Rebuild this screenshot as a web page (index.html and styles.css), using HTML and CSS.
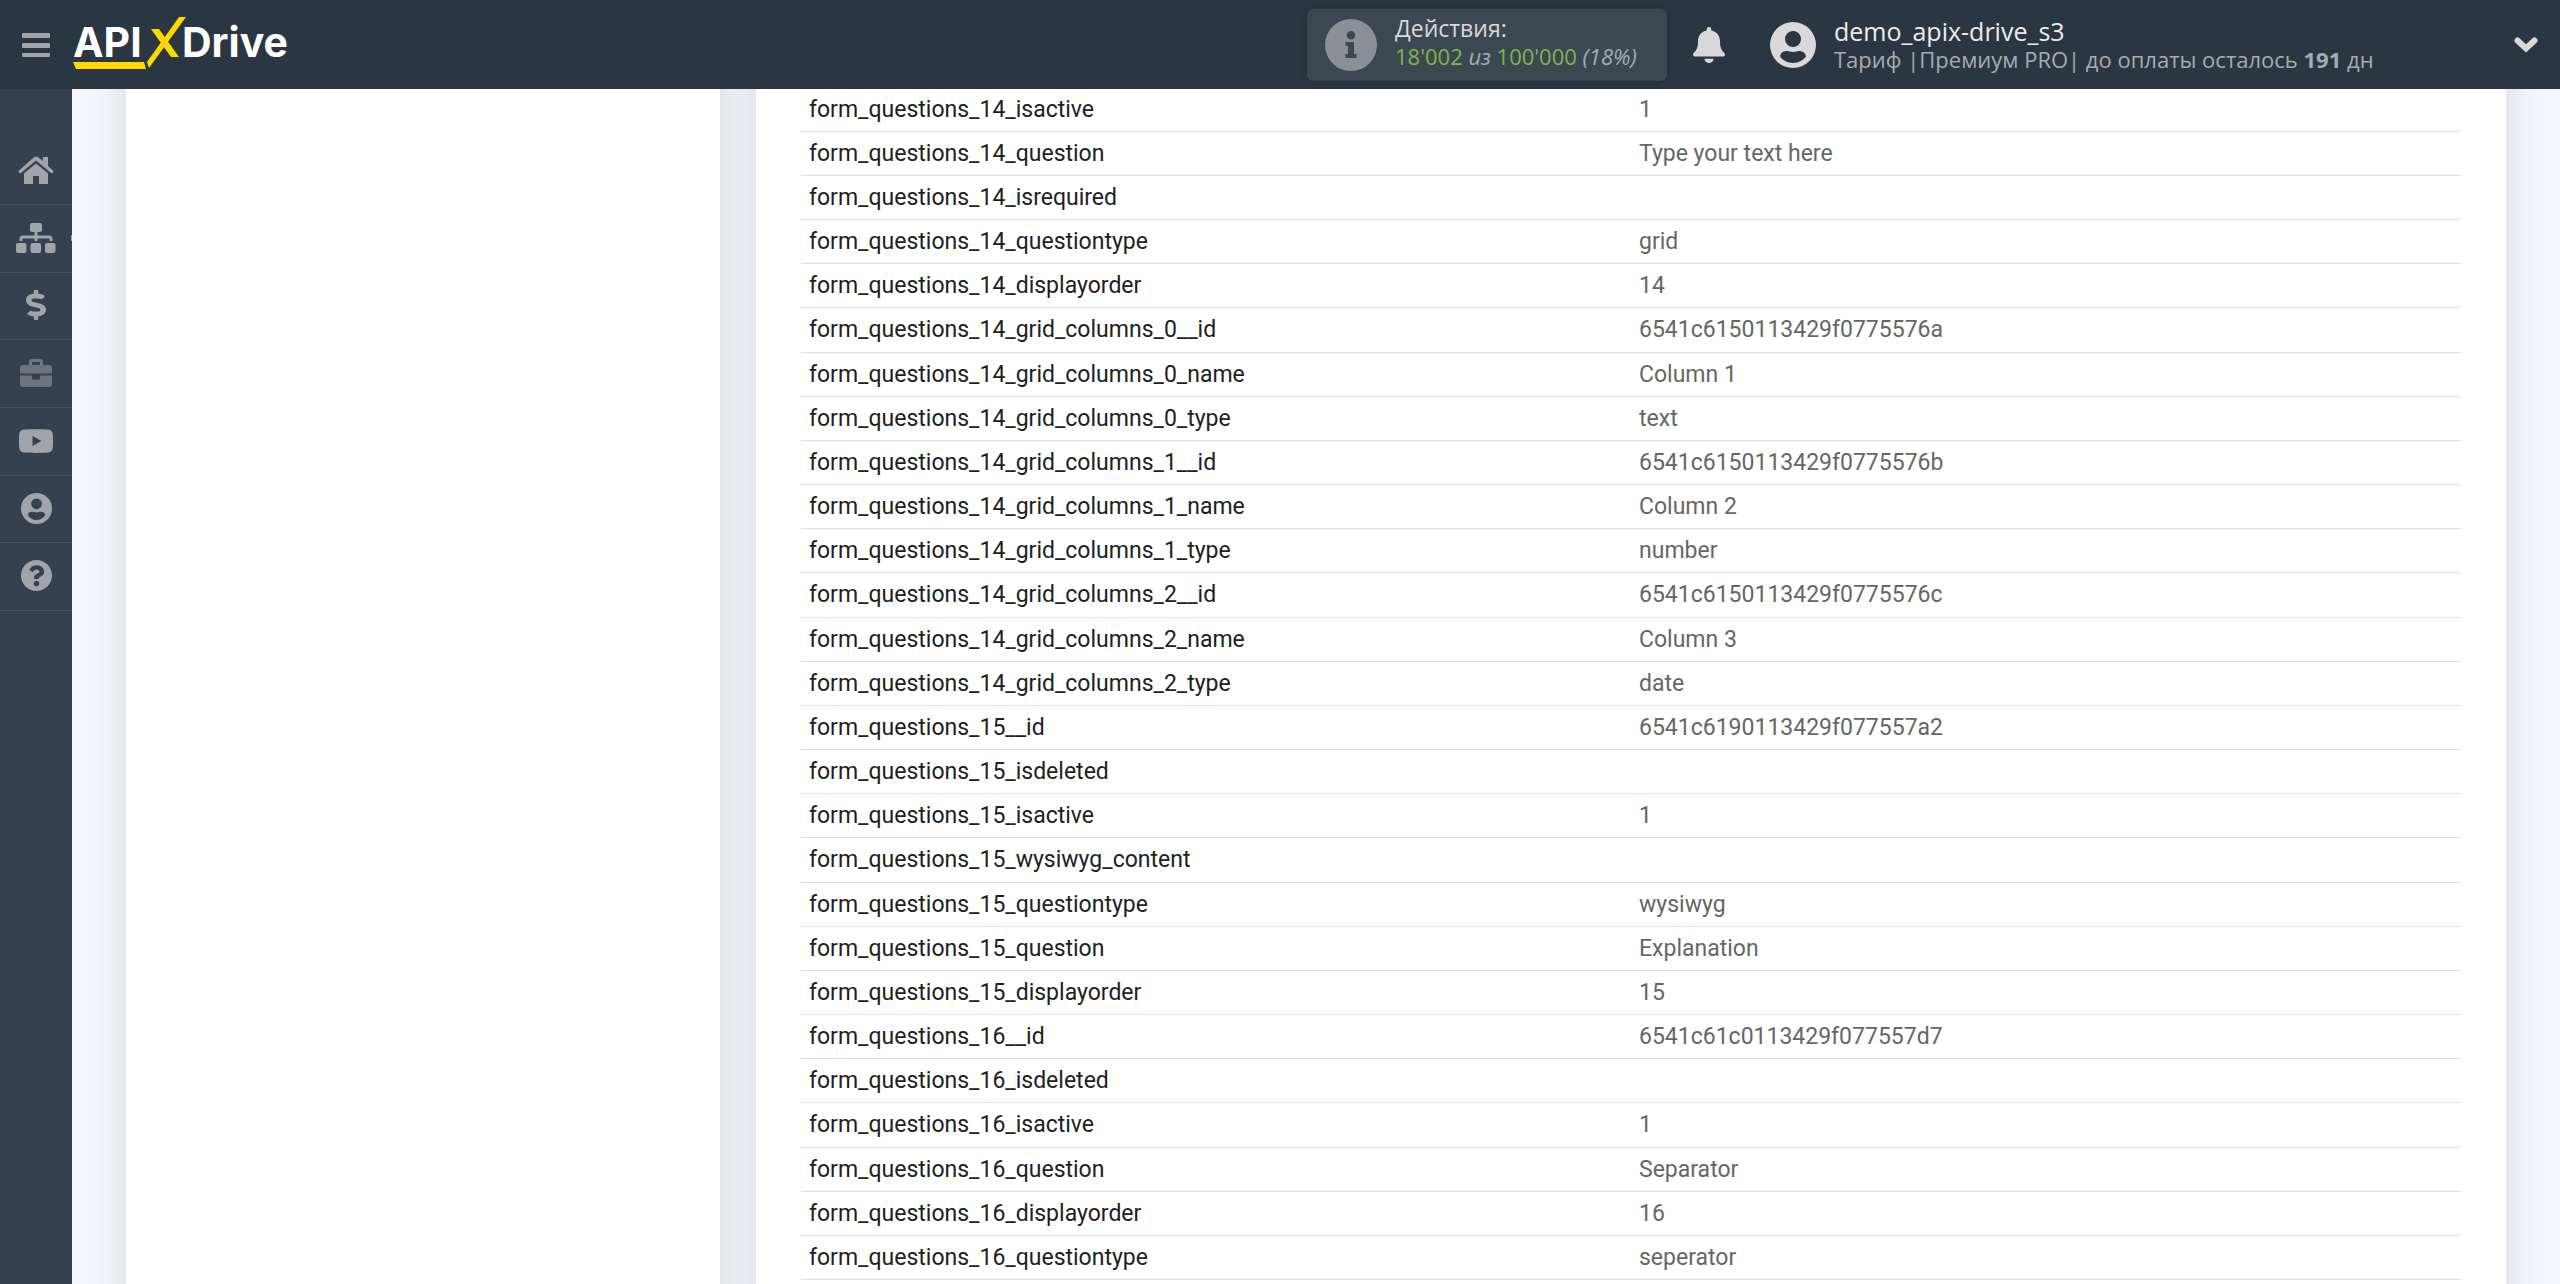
FILE: index.html
```html
<!DOCTYPE html>
<html lang="ru">
<head>
<meta charset="utf-8">
<meta name="viewport" content="width=device-width, initial-scale=1">
<title>ApiX-Drive</title>
<link rel="stylesheet" href="styles.css">
</head>
<body>
<header class="topbar">
  <button class="menu-toggle" type="button" aria-label="Меню">
    <svg width="28" height="24" viewBox="0 0 28 24"><rect width="28" height="5" rx="1"/><rect y="10" width="28" height="5" rx="1"/><rect y="20" width="28" height="4" rx="1"/></svg>
  </button>
  <a class="logo" href="#" aria-label="APIXDrive">
    <svg width="224" height="56" viewBox="0 0 224 56">
      <text class="logo-text" x="0" y="40">API</text>
      <path class="logo-mark" d="M78 12h8l20 28h-8zM106 0h7L76 51l-2-6zM0 45h71l2 7H3z"/>
      <text class="logo-text" x="109" y="40">Drive</text>
    </svg>
  </a>
  <div class="actions">
    <svg width="52" height="52" viewBox="0 0 52 52"><path fill-rule="evenodd" d="M26 0a26 26 0 1 1 0 52a26 26 0 1 1 0-52zM26 12a4.300 4.300 0 1 0 0 8.600a4.300 4.300 0 0 0 0-8.600zM20.500 23v4h2.500v8h-2.500v4h11v-4H29V23z"/></svg>
    <div class="actions-text">
      <span class="line-main">Действия:</span>
      <span class="line-sub"><b>18'002</b> <i>из</i> <b>100'000</b> <i>(18%)</i></span>
    </div>
  </div>
  <button class="bell" type="button" aria-label="Уведомления">
    <svg width="32" height="36" viewBox="0 0 32 36"><path d="M16 0a2.300 2.300 0 0 1 2.300 2.300v1.200C24 4.600 27 9 27 14.500c0 7 2 9 4.300 11.500 1.500 1.800.3 3.500-1.500 3.500H2.200C.4 29.500-.8 27.800.7 26 3 23.500 5 21.500 5 14.500 5 9 8 4.600 13.700 3.500V2.300A2.300 2.300 0 0 1 16 0zM11.500 31.700h9a4.500 4.300 0 0 1-9 0z"/></svg>
  </button>
  <button class="user" type="button">
    <svg width="46" height="46" viewBox="0 0 46 46"><path fill-rule="evenodd" d="M23 0a23 23 0 1 1 0 46a23 23 0 1 1 0-46zM23 9a8 8 0 1 0 0 16a8 8 0 0 0 0-16zM17 29c-4 0-6.500 2.200-7 5.500C12.500 38 17 41 23 41s10.500-3 13-6.500c-.5-3.300-3-5.500-7-5.500-2 0-3 1-6 1s-4-1-6-1z"/></svg>
    <span class="user-text">
      <span class="line-main">demo_apix-drive_s3</span>
      <span class="line-sub">Тариф |Премиум PRO| до оплаты осталось <strong>191</strong> дн</span>
    </span>
    <svg class="chevron" width="24" height="16" viewBox="0 0 24 16"><path d="M3.500 3.500L12 11.500l8.500-8"/></svg>
  </button>
</header>
<div class="shell">
  <nav class="sidebar" aria-label="Разделы">
    <a href="#" aria-label="Главная"><svg width="36" height="28" viewBox="0 0 36 28"><path d="M25 5V1h5v9l5 4.500c1.500 1.500-.8 3.500-2.200 2.300L18 4.600 3.200 16.800C1.800 18-.5 16 1 14.500L16 1.200c1.300-1 2.700-1 4 0zM18 7.500l12 9.800V28h-9v-8h-6v8H6V17.300z"/></svg></a>
    <a class="has-sub" href="#" aria-label="Связи"><svg width="40" height="30" viewBox="0 0 40 30"><rect x="14" width="12" height="9" rx="2"/><path d="M18.500 8h3v4.500H34a3 3 0 0 1 2.500 3V18h-3v-2.500h-12V18h-3v-2.500h-12V18h-3v-2.500a3 3 0 0 1 2.500-3h12.500z"/><rect y="20" width="10.500" height="10" rx="2"/><rect x="14.500" y="20" width="10.500" height="10" rx="2"/><rect x="29" y="20" width="10.500" height="10" rx="2"/></svg></a>
    <a href="#" aria-label="Оплата"><svg width="20" height="30" viewBox="0 0 288 512" preserveAspectRatio="none"><path d="M209.200 233.400l-108-31.600C88.700 198.200 80 186.500 80 173.500c0-16.300 13.200-29.500 29.500-29.500h66.300c12.200 0 24.200 3.700 34.200 10.500 6.100 4.100 14.300 3.100 19.500-2l34.800-34c7.100-6.900 6.100-18.400-1.800-24.500C238 74.800 207.400 64.100 176 64V16c0-8.800-7.200-16-16-16h-32c-8.800 0-16 7.200-16 16v48h-2.500C45.800 64-5.400 118.700.5 183.600c4.200 46.100 39.400 83.600 83.800 96.600l102.500 30c12.500 3.700 21.200 15.300 21.200 28.300 0 16.300-13.200 29.500-29.500 29.500h-66.300C100 368 88 364.300 78 357.500c-6.100-4.100-14.300-3.100-19.500 2l-34.800 34c-7.100 6.900-6.100 18.400 1.800 24.500 24.500 19.200 55.100 29.900 86.500 30v48c0 8.800 7.200 16 16 16h32c8.800 0 16-7.200 16-16v-48.200c46.600-.9 90.300-28.600 105.700-72.700 21.500-61.600-14.600-124.800-72.500-141.700z"/></svg></a>
    <a class="dim" href="#" aria-label="Проекты"><svg width="32" height="28" viewBox="0 0 32 28"><path fill-rule="evenodd" d="M9 6V3a3 3 0 0 1 3-3h8a3 3 0 0 1 3 3v3h6a3 3 0 0 1 3 3v5.500H0V9a3 3 0 0 1 3-3zM12 6h8V3h-8zM0 16.500h12V19c0 1 .5 1.500 1.500 1.500h5c1 0 1.500-.5 1.500-1.500v-2.500h12V25a3 3 0 0 1-3 3H3a3 3 0 0 1-3-3z"/></svg></a>
    <a href="#" aria-label="Видео"><svg width="34" height="24" viewBox="0 0 34 24"><path fill-rule="evenodd" d="M5 .5C12 0 22 0 29 .5c3 .2 4.400 2 4.700 4.500.4 4 .4 10 0 14-.3 2.500-1.700 4.300-4.700 4.500-7 .5-17 .5-24 0C2 23.300.6 21.500.3 19c-.4-4-.4-10 0-14C.6 2.500 2 .7 5 .5zM13.500 7v10l9-5z"/></svg></a>
    <a href="#" aria-label="Профиль"><svg width="31" height="31" viewBox="0 0 46 46"><path fill-rule="evenodd" d="M23 0a23 23 0 1 1 0 46a23 23 0 1 1 0-46zM23 8a8 8 0 1 0 0 16a8 8 0 0 0 0-16zM17 28c-4 0-6.500 1.800-7 4.500C12.500 36.500 17 40 23 40s10.500-3.500 13-7.500c-.5-2.700-3-4.500-7-4.500-2 0-3 1-6 1s-4-1-6-1z"/></svg></a>
    <a href="#" aria-label="Помощь"><svg width="31" height="31" viewBox="8 8 496 496"><path d="M504 256c0 137-111 248-248 248S8 393 8 256C8 119.100 119 8 256 8s248 111.100 248 248zM262.700 90c-54.500 0-89.300 23-116.500 63.800-3.500 5.300-2.400 12.400 2.700 16.300l34.700 26.300c5.200 3.900 12.600 3 16.700-2.100 17.900-22.700 30.100-35.800 57.300-35.800 20.400 0 45.700 13.100 45.700 33 0 15-12.400 22.700-32.500 34C247.100 238.500 216 254.900 216 296v4c0 6.600 5.400 12 12 12h56c6.600 0 12-5.400 12-12v-1.300c0-28.500 83.200-29.600 83.200-106.700 0-58-60.200-102-116.500-102zM256 338c-25.400 0-46 20.600-46 46s20.600 46 46 46 46-20.600 46-46-20.600-46-46-46z"/></svg></a>
  </nav>
  <main class="content">
    <aside class="card"></aside>
    <section class="card card-data">
      <table class="fields">
        <tbody>
          <tr><th scope="row">form_questions_14_isactive</th><td>1</td></tr>
          <tr><th scope="row">form_questions_14_question</th><td>Type your text here</td></tr>
          <tr><th scope="row">form_questions_14_isrequired</th><td></td></tr>
          <tr><th scope="row">form_questions_14_questiontype</th><td>grid</td></tr>
          <tr><th scope="row">form_questions_14_displayorder</th><td>14</td></tr>
          <tr><th scope="row">form_questions_14_grid_columns_0__id</th><td>6541c6150113429f0775576a</td></tr>
          <tr><th scope="row">form_questions_14_grid_columns_0_name</th><td>Column 1</td></tr>
          <tr><th scope="row">form_questions_14_grid_columns_0_type</th><td>text</td></tr>
          <tr><th scope="row">form_questions_14_grid_columns_1__id</th><td>6541c6150113429f0775576b</td></tr>
          <tr><th scope="row">form_questions_14_grid_columns_1_name</th><td>Column 2</td></tr>
          <tr><th scope="row">form_questions_14_grid_columns_1_type</th><td>number</td></tr>
          <tr><th scope="row">form_questions_14_grid_columns_2__id</th><td>6541c6150113429f0775576c</td></tr>
          <tr><th scope="row">form_questions_14_grid_columns_2_name</th><td>Column 3</td></tr>
          <tr><th scope="row">form_questions_14_grid_columns_2_type</th><td>date</td></tr>
          <tr><th scope="row">form_questions_15__id</th><td>6541c6190113429f077557a2</td></tr>
          <tr><th scope="row">form_questions_15_isdeleted</th><td></td></tr>
          <tr><th scope="row">form_questions_15_isactive</th><td>1</td></tr>
          <tr><th scope="row">form_questions_15_wysiwyg_content</th><td></td></tr>
          <tr><th scope="row">form_questions_15_questiontype</th><td>wysiwyg</td></tr>
          <tr><th scope="row">form_questions_15_question</th><td>Explanation</td></tr>
          <tr><th scope="row">form_questions_15_displayorder</th><td>15</td></tr>
          <tr><th scope="row">form_questions_16__id</th><td>6541c61c0113429f077557d7</td></tr>
          <tr><th scope="row">form_questions_16_isdeleted</th><td></td></tr>
          <tr><th scope="row">form_questions_16_isactive</th><td>1</td></tr>
          <tr><th scope="row">form_questions_16_question</th><td>Separator</td></tr>
          <tr><th scope="row">form_questions_16_displayorder</th><td>16</td></tr>
          <tr><th scope="row">form_questions_16_questiontype</th><td>seperator</td></tr>
        </tbody>
      </table>
    </section>
  </main>
</div>
</body>
</html>
```
FILE: styles.css
```css
* {
  box-sizing: border-box;
}

body {
  margin: 0;
  min-height: 100vh;
  display: flex;
  flex-direction: column;
  background: #f3f7fc;
  font-family: Roboto, "Liberation Sans", sans-serif;
}

button {
  padding: 0;
  border: 0;
  background: none;
  font: inherit;
  color: inherit;
  text-align: left;
  cursor: pointer;
}

svg {
  display: block;
  flex: none;
  fill: currentColor;
}

/* Top bar */
.topbar {
  position: sticky;
  top: 0;
  z-index: 2;
  display: flex;
  align-items: center;
  height: 89px;
  padding: 0 22px;
  background: #2b3643;
  color: #d9d9d9;
  font-family: "Open Sans", "Noto Sans", sans-serif;
}

.menu-toggle {
  margin-right: 23px;
  color: #9fa5aa;
}

.logo {
  color: #fff;
}

.logo-text {
  font-family: Inter, sans-serif;
  font-size: 41px;
  font-weight: 700;
}

.logo-mark {
  fill: #ffd800;
}

.actions {
  display: flex;
  align-items: center;
  gap: 18px;
  width: 360px;
  height: 72px;
  margin-left: auto;
  padding: 0 18px;
  border-radius: 7px;
  background: #3b4851;
  box-shadow: 0 0 8px rgba(0, 0, 0, .15);
}

.actions > svg {
  color: #899197;
}

.actions-text,
.user-text {
  display: flex;
  flex-direction: column;
}

.actions-text {
  padding-bottom: 6px;
}

.line-main {
  font-size: 23px;
  line-height: 28px;
}

.line-sub {
  font-size: 22px;
  line-height: 28px;
  color: #a6abb2;
}

.line-sub b {
  font-weight: 400;
  color: #7fb54a;
}

.bell {
  margin: 0 45px 0 26px;
}

.user {
  display: flex;
  align-items: center;
  gap: 18px;
  width: 30vw;
}

.user .line-main {
  font-size: 25px;
  color: #ececec;
}

.chevron {
  margin-left: auto;
  fill: none;
  stroke: currentColor;
  stroke-width: 6;
  stroke-linecap: round;
}

/* Page */
.shell {
  flex: 1;
  display: flex;
}

.sidebar {
  flex: none;
  width: 72px;
  padding-top: 48px;
  background: #364150;
  color: #9fa5aa;
}

.sidebar a {
  display: flex;
  align-items: center;
  justify-content: center;
  height: 68px;
  padding-bottom: 2px;
  border-bottom: 1px solid #485462;
  color: inherit;
}

.sidebar a:nth-child(3n) {
  height: 67px;
}

.sidebar .dim {
  color: #6c747e;
}

.sidebar .has-sub {
  position: relative;
}

.has-sub::after {
  content: "";
  position: absolute;
  right: 0;
  width: 1px;
  height: 6px;
  background: #9fa5aa;
}

.content {
  flex: 1;
  display: grid;
  grid-template-columns: 594fr 1750fr;
  gap: 36px;
  padding: 0 54px;
  overflow: hidden;
}

/* Cards run past both ends of the visible area */
.card {
  margin: -40px 0;
  padding: 40px 45px;
  background: #fff;
  box-shadow: 0 0 36px rgba(0, 0, 0, .12);
}

.fields {
  width: 100%;
  border-collapse: separate;
  border-spacing: 0;
  table-layout: fixed;
  font-size: 23px;
  line-height: 28px;
}

.fields th,
.fields td {
  height: 44px;
  padding: 0 8px;
  border-bottom: 1px solid #dedede;
  text-align: left;
  font-weight: 400;
}

.fields th {
  color: #212121;
}

.fields td {
  color: #666;
}

.fields tr:first-child > * {
  height: 43px;
}

.fields tr:nth-child(6n) > * {
  height: 45px;
}
```
